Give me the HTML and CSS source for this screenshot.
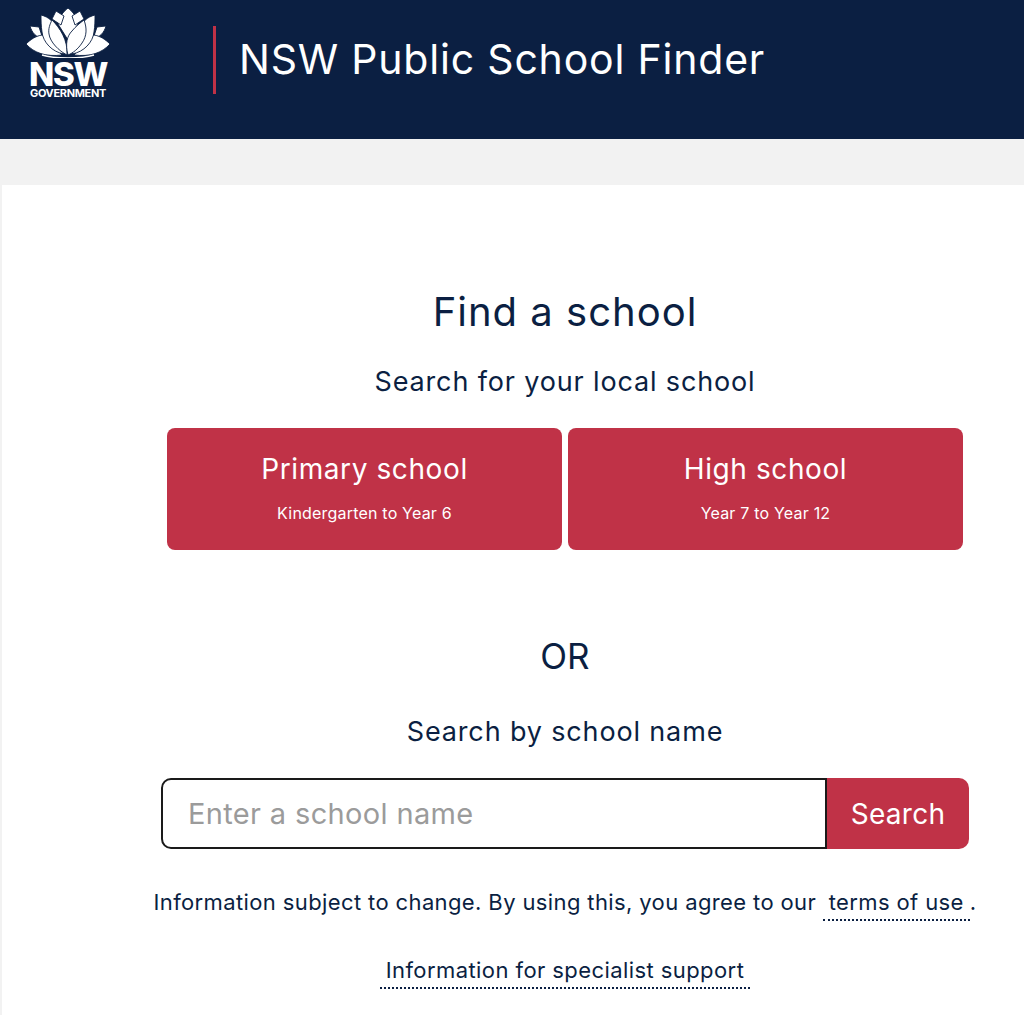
FILE: index.html
```html
<!DOCTYPE html>
<html lang="en">
<head>
<meta charset="utf-8">
<title>NSW Public School Finder</title>
<link rel="stylesheet" href="styles.css">
</head>
<body>
<header class="site-header">
  <div class="logo">
    <svg class="logo-flower" viewBox="0 0 84 50" width="84" height="50" aria-hidden="true">
      <g fill="#fff" stroke="#0b1f42" stroke-width="0.9" stroke-linejoin="round">
        <path d="M42 0 C47 4 51 9 52 16 L42 32 L32 16 C33 9 37 4 42 0Z"/>
        <path d="M30 3 L38 8 L35 17 L26 11Z"/>
        <path d="M54 3 L46 8 L49 17 L58 11Z"/>
        <path d="M4 18 L13 19 L17 31 C10 29 6 25 4 18Z"/>
        <path d="M80 18 L71 19 L67 31 C74 29 78 25 80 18Z"/>
        <path d="M0 36 C5 31 10 28 16 27 L36 47 C20 49 8 45 0 36Z"/>
        <path d="M84 36 C79 31 74 28 68 27 L48 47 C64 49 76 45 84 36Z"/>
        <path d="M15 7 C23 9 28 14 31 21 L38 46 C26 44 17 34 16 24 C15 18 15 12 15 7Z"/>
        <path d="M69 7 C61 9 56 14 53 21 L46 46 C58 44 67 34 68 24 C69 18 69 12 69 7Z"/>
        <path d="M26 12 C34 20 42 32 41 47 C33 43 24 34 23 26 C22 21 24 16 26 12Z"/>
        <path d="M58 12 C61 20 61 28 56 35 C52 41 47 45 42 47 C39 36 41 28 46 23 C50 18 54 15 58 12Z"/>
      </g>
      <path d="M16 47 C28 51 56 51 68 47" fill="none" stroke="#fff" stroke-width="1.4"/>
    </svg>
    <span class="logo-nsw">NSW</span>
    <span class="logo-gov">GOVERNMENT</span>
  </div>
  <h1 class="site-title">NSW Public School Finder</h1>
</header>
<div class="band"></div>
<main class="panel">
  <div class="finder">
    <h2 class="finder-title">Find a school</h2>
    <p class="finder-sub">Search for your local school</p>
    <div class="choices">
      <a class="choice" href="#"><span class="choice-name">Primary school</span><span class="choice-range">Kindergarten to Year 6</span></a>
      <a class="choice" href="#"><span class="choice-name">High school</span><span class="choice-range">Year 7 to Year 12</span></a>
    </div>
    <p class="or">OR</p>
    <p class="finder-sub by-name">Search by school name</p>
    <form class="search">
      <input class="search-input" type="text" placeholder="Enter a school name">
      <button class="search-button" type="button">Search</button>
    </form>
    <p class="note">Information subject to change. By using this, you agree to our <a class="dotted" href="#">terms of use</a>.</p>
    <p class="note support"><a class="dotted" href="#">Information for specialist support</a></p>
  </div>
</main>
</body>
</html>
```
FILE: styles.css
```css
html, body {
  margin: 0;
  height: 1015px;
  overflow: hidden;
}
body {
  background: #f2f2f2;
  color: #0b1f42;
  font-family: Inter, "Open Sans", Arial, sans-serif;
  display: flex;
  flex-direction: column;
}
.site-header {
  background: #0b1f42;
  height: 139px;
  flex: none;
  display: flex;
  align-items: flex-start;
  box-sizing: border-box;
  padding: 8px 0 0 26px;
}
.logo {
  width: 84px;
  display: flex;
  flex-direction: column;
  align-items: center;
  color: #fff;
}
.logo-flower { display: block; flex: none; }
.logo-nsw {
  font-weight: 800;
  font-size: 33px;
  line-height: 26px;
  letter-spacing: -1.3px;
  margin-top: 3px;
}
.logo-gov {
  font-weight: 700;
  font-size: 11px;
  line-height: 10px;
  letter-spacing: -0.35px;
  margin-top: 1px;
}
.site-title {
  margin: 18px 0 0 103px;
  height: 68px;
  border-left: 3px solid #c03247;
  padding-left: 23px;
  font-size: 41px;
  line-height: 66px;
  letter-spacing: 0.8px;
  font-weight: 400;
  color: #fff;
  white-space: nowrap;
}
.band { height: 46px; flex: none; }
.panel {
  flex: 1;
  margin-left: 2px;
  background: #fff;
  padding-left: 159px;
}
.finder {
  width: 808px;
  padding-top: 103px;
  text-align: center;
}
.finder-title {
  margin: 0;
  font-size: 40px;
  line-height: 48px;
  letter-spacing: 1px;
  font-weight: 400;
}
.finder-sub {
  margin: 28px 0 0;
  font-size: 27px;
  line-height: 36px;
  letter-spacing: 0.85px;
}
.choices {
  display: flex;
  justify-content: center;
  gap: 6px;
  margin-top: 28px;
}
.choice {
  width: 395px;
  height: 122px;
  box-sizing: border-box;
  padding-top: 23px;
  background: #c03247;
  border-radius: 8px;
  color: #fff;
  text-decoration: none;
  display: flex;
  flex-direction: column;
  align-items: center;
}
.choice-name { font-size: 28px; line-height: 36px; letter-spacing: 0.6px; }
.choice-range { font-size: 16px; line-height: 20px; letter-spacing: 0.2px; margin-top: 16px; }
.or {
  margin: 84px 0 0;
  font-size: 35px;
  line-height: 44px;
}
.by-name { margin-top: 36px; }
.search {
  display: flex;
  margin-top: 28px;
  height: 71px;
}
.search-input {
  flex: 1;
  min-width: 0;
  box-sizing: border-box;
  border: 2px solid #1a1a1a;
  border-radius: 10px 0 0 10px;
  padding: 0 25px;
  background: #fff;
  font: 400 29px Inter, "Open Sans", Arial, sans-serif;
  letter-spacing: 0.35px;
  color: #0b1f42;
  outline: none;
}
.search-input::placeholder { color: #9b9b9b; opacity: 1; }
.search-button {
  width: 142px;
  border: 0;
  border-radius: 0 10px 10px 0;
  background: #c03247;
  color: #fff;
  font: 400 28px Inter, "Open Sans", Arial, sans-serif;
  letter-spacing: 0.3px;
}
.note {
  margin: 38px -12px 0;
  font-size: 22px;
  line-height: 30px;
  letter-spacing: 0.38px;
  white-space: nowrap;
}
.dotted {
  color: #0b1f42;
  text-decoration: none;
  border-bottom: 2px dotted #0b1f42;
  display: inline-block;
  padding: 0 6px 2px;
}
.support { margin-top: 34px; letter-spacing: 0.42px; }
```
